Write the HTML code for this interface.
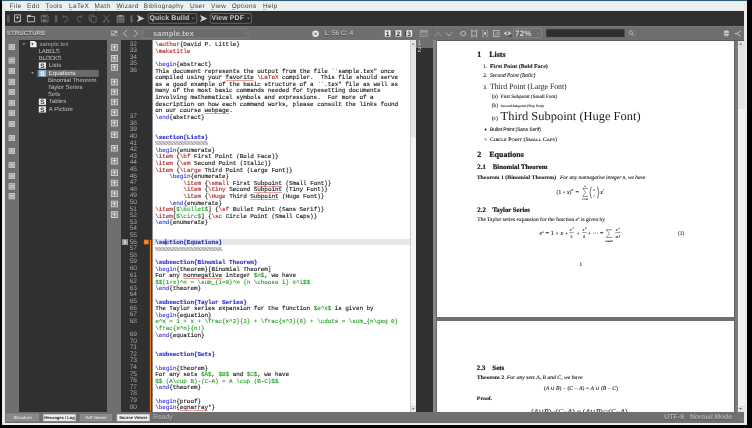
<!DOCTYPE html><html><head><meta charset="utf-8"><style>
*{box-sizing:border-box;margin:0;padding:0}
html,body{width:752px;height:428px;overflow:hidden;background:#000}
body{position:relative;font-family:"Liberation Sans",sans-serif;text-rendering:geometricPrecision}
.a{position:absolute;white-space:nowrap}
.dark{background:#303030}
.mi{font-size:6.4px;letter-spacing:0.4px;color:#3c3c3c;line-height:7px}
.code{font-family:"Liberation Mono",monospace;font-size:6px;letter-spacing:-0.08px;line-height:6.6px;color:#111;-webkit-text-stroke:0.1px;white-space:pre}
.ln{font-family:"Liberation Sans",sans-serif;font-size:6.6px;letter-spacing:-0.35px;line-height:6.6px;color:#a8a8a8;text-align:right;white-space:pre}
.r{color:#a81c1c}.b{color:#3434d6}.g{color:#22a022}.c{color:#8a8a8a}.sb{color:#2a2ac8;font-weight:bold}
.sp{text-decoration:underline #f0a0a0;text-decoration-thickness:1px;text-underline-offset:0.7px}
.tree{font-size:6px;line-height:7px;color:#c4c4c4}
.ser{font-family:"Liberation Serif",serif;color:#111}
</style></head><body><div id="root" style="position:absolute;left:0;top:0;width:752px;height:428px;will-change:transform;background:#000">
<div class="a" style="left:2px;top:0px;width:745px;height:425px;background:#e9eaeb;"></div>
<div class="a" style="left:2px;top:0px;width:745px;height:1px;background:#2e6079;"></div>
<div class="a" style="left:2px;top:1px;width:745px;height:1.3px;background:#dfe8ee;"></div>
<div class="a" style="left:5px;top:2.3px;width:739px;height:8.2px;background:#eeeff0;"></div>
<div class="a mi" style="left:9.7px;top:3.2px;">File</div>
<div class="a" style="left:10.0px;top:9.0px;width:3.2px;height:0.45px;background:#b8b8b8;"></div>
<div class="a mi" style="left:27px;top:3.2px;">Edit</div>
<div class="a" style="left:27.3px;top:9.0px;width:3.2px;height:0.45px;background:#b8b8b8;"></div>
<div class="a mi" style="left:45.6px;top:3.2px;">Tools</div>
<div class="a" style="left:45.9px;top:9.0px;width:3.2px;height:0.45px;background:#b8b8b8;"></div>
<div class="a mi" style="left:69px;top:3.2px;">LaTeX</div>
<div class="a" style="left:69.3px;top:9.0px;width:3.2px;height:0.45px;background:#b8b8b8;"></div>
<div class="a mi" style="left:94.6px;top:3.2px;">Math</div>
<div class="a" style="left:94.89999999999999px;top:9.0px;width:3.2px;height:0.45px;background:#b8b8b8;"></div>
<div class="a mi" style="left:116.4px;top:3.2px;">Wizard</div>
<div class="a" style="left:116.7px;top:9.0px;width:3.2px;height:0.45px;background:#b8b8b8;"></div>
<div class="a mi" style="left:143.8px;top:3.2px;">Bibliography</div>
<div class="a" style="left:144.10000000000002px;top:9.0px;width:3.2px;height:0.45px;background:#b8b8b8;"></div>
<div class="a mi" style="left:190px;top:3.2px;">User</div>
<div class="a" style="left:190.3px;top:9.0px;width:3.2px;height:0.45px;background:#b8b8b8;"></div>
<div class="a mi" style="left:210.9px;top:3.2px;">View</div>
<div class="a" style="left:211.20000000000002px;top:9.0px;width:3.2px;height:0.45px;background:#b8b8b8;"></div>
<div class="a mi" style="left:231.7px;top:3.2px;">Options</div>
<div class="a" style="left:232.0px;top:9.0px;width:3.2px;height:0.45px;background:#b8b8b8;"></div>
<div class="a mi" style="left:263px;top:3.2px;">Help</div>
<div class="a" style="left:263.3px;top:9.0px;width:3.2px;height:0.45px;background:#b8b8b8;"></div>
<div class="a" style="left:5px;top:10.5px;width:739px;height:15px;background:#303030;"></div>
<div class="a" style="left:5px;top:25.5px;width:739px;height:397px;background:#6f6f6f;"></div>
<div class="a" style="left:5px;top:25.5px;width:739px;height:1.5px;background:#767676;"></div>
<div class="a " style="left:6.8px;top:30.4px;font-size:6.2px;font-weight:bold;color:#c4c4c4;letter-spacing:0.05px;text-shadow:0 0.6px 0 #4a4a4a;line-height:8px">STRUCTURE</div>
<div class="a" style="left:19.2px;top:40.4px;width:87.8px;height:371.3px;background:#303030;"></div>
<div class="a" style="left:121.1px;top:40.4px;width:31px;height:371.3px;background:#303030;"></div>
<div class="a" style="left:152px;top:40.4px;width:1.4px;height:371.3px;background:#8c8c8c;"></div>
<div class="a" style="left:153.4px;top:40.4px;width:256.9px;height:371.3px;background:#fff;"></div>
<div class="a" style="left:410.3px;top:40.4px;width:5.9px;height:371.3px;background:#e4e5e6;"></div>
<div class="a" style="left:410.3px;top:137.3px;width:5.9px;height:268.7px;background:#f3f3f3;"></div>
<div class="a" style="left:410.3px;top:40.4px;width:0.6px;height:371.3px;background:#cfcfcf;"></div>
<div class="a" style="left:416.2px;top:40.2px;width:17.3px;height:371.5px;background:#303030;"></div>
<div class="a" style="left:416.2px;top:40.2px;width:17.3px;height:7.4px;background:#6f6f6f;"></div>
<div class="a" style="left:433.3px;top:40.2px;width:4px;height:371.5px;background:#868686;"></div>
<div class="a" style="left:435.7px;top:40.2px;width:1.6px;height:371.5px;background:#686868;"></div>
<div class="a" style="left:437.4px;top:41px;width:296.6px;height:276.3px;background:#fff;"></div>
<div class="a" style="left:437.4px;top:321px;width:296.6px;height:90.7px;background:#fff;"></div>
<div class="a" style="left:734px;top:40.4px;width:3.5px;height:371.3px;background:#7a7a7a;"></div>
<div class="a" style="left:737.5px;top:40.4px;width:7px;height:371.3px;background:#e4e5e6;"></div>
<div class="a" style="left:737.5px;top:108.9px;width:7px;height:297.1px;background:#f3f3f3;"></div>
<div class="a" style="left:734px;top:40.4px;width:1px;height:371.3px;background:#626262;"></div>
<div class="a" style="left:437.2px;top:39.6px;width:307px;height:1.2px;background:#5c5c5c;"></div>
<div class="a" style="left:153.4px;top:238.7px;width:256.9px;height:6.6px;background:#e6e6e6;"></div>
<div class="a" style="left:153.4px;top:40.4px;width:256.9px;height:371.3px;overflow:hidden">
<div class="a code" style="left:1.8px;top:1.80px"><span class="r">\author</span>{David P. Little}</div>
<div class="a code" style="left:1.8px;top:8.40px"><span class="r">\maketitle</span></div>
<div class="a code" style="left:1.8px;top:15.00px"></div>
<div class="a code" style="left:1.8px;top:21.60px"><span class="b">\begin</span>{abstract}</div>
<div class="a code" style="left:1.8px;top:28.20px">This document represents the output from the file ``sample.tex" once</div>
<div class="a code" style="left:1.8px;top:34.80px">compiled using your <span class="sp">favorite</span> <span class="r">\LaTeX</span> compiler.  This file should serve</div>
<div class="a code" style="left:1.8px;top:41.40px">as a good example of the basic structure of a ``.tex" file as well as</div>
<div class="a code" style="left:1.8px;top:48.00px">many of the most basic commands needed for typesetting documents</div>
<div class="a code" style="left:1.8px;top:54.60px">involving mathematical symbols and expressions.  For more of a</div>
<div class="a code" style="left:1.8px;top:61.20px">description on how each command works, please consult the links found</div>
<div class="a code" style="left:1.8px;top:67.80px">on our course <span class="sp">webpage</span>.</div>
<div class="a code" style="left:1.8px;top:74.40px"><span class="b">\end</span>{abstract}</div>
<div class="a code" style="left:1.8px;top:81.00px"></div>
<div class="a code" style="left:1.8px;top:87.60px"></div>
<div class="a code" style="left:1.8px;top:94.20px"><span class="sb">\section{Lists}</span></div>
<div class="a code" style="left:1.8px;top:100.80px"><span class="c">%%%%%%%%%%%%%%%</span></div>
<div class="a code" style="left:1.8px;top:107.40px"><span class="b">\begin</span>{enumerate}</div>
<div class="a code" style="left:1.8px;top:114.00px"><span class="r">\item</span> {<span class="r">\bf</span> First Point (Bold Face)}</div>
<div class="a code" style="left:1.8px;top:120.60px"><span class="r">\item</span> {<span class="r">\em</span> Second Point (Italic)}</div>
<div class="a code" style="left:1.8px;top:127.20px"><span class="r">\item</span> {<span class="r">\Large</span> Third Point (Large Font)}</div>
<div class="a code" style="left:1.8px;top:133.80px">    <span class="b">\begin</span>{enumerate}</div>
<div class="a code" style="left:1.8px;top:140.40px">        <span class="r">\item</span> {<span class="r">\small</span> First <span class="sp">Subpoint</span> (Small Font)}</div>
<div class="a code" style="left:1.8px;top:147.00px">        <span class="r">\item</span> {<span class="r">\tiny</span> Second <span class="sp">Subpoint</span> (Tiny Font)}</div>
<div class="a code" style="left:1.8px;top:153.60px">        <span class="r">\item</span> {<span class="r">\Huge</span> Third <span class="sp">Subpoint</span> (Huge Font)}</div>
<div class="a code" style="left:1.8px;top:160.20px">    <span class="b">\end</span>{enumerate}</div>
<div class="a code" style="left:1.8px;top:166.80px"><span class="r">\item</span>[<span class="g">$\bullet$</span>] {<span class="r">\sf</span> Bullet Point (Sans Serif)}</div>
<div class="a code" style="left:1.8px;top:173.40px"><span class="r">\item</span>[<span class="g">$\circ$</span>] {<span class="r">\sc</span> Circle Point (Small Caps)}</div>
<div class="a code" style="left:1.8px;top:180.00px"><span class="b">\end</span>{enumerate}</div>
<div class="a code" style="left:1.8px;top:186.60px"></div>
<div class="a code" style="left:1.8px;top:193.20px"></div>
<div class="a code" style="left:1.8px;top:199.80px"><span class="sb">\section{Equations}</span></div>
<div class="a code" style="left:1.8px;top:206.40px"><span class="c">%%%%%%%%%%%%%%%%%%%</span></div>
<div class="a code" style="left:1.8px;top:213.00px"></div>
<div class="a code" style="left:1.8px;top:219.60px"><span class="sb">\subsection{Binomial Theorem}</span></div>
<div class="a code" style="left:1.8px;top:226.20px"><span class="b">\begin</span>{theorem}[Binomial Theorem]</div>
<div class="a code" style="left:1.8px;top:232.80px">For any <span class="sp">nonnegative</span> integer <span class="g">$n$</span>, we have</div>
<div class="a code" style="left:1.8px;top:239.40px"><span class="g">$$(1+x)^n = \sum_{i=0}^n {n \choose i} x^i$$</span></div>
<div class="a code" style="left:1.8px;top:246.00px"><span class="b">\end</span>{theorem}</div>
<div class="a code" style="left:1.8px;top:252.60px"></div>
<div class="a code" style="left:1.8px;top:259.20px"><span class="sb">\subsection{Taylor Series}</span></div>
<div class="a code" style="left:1.8px;top:265.80px">The Taylor series expansion for the function <span class="g">$e^x$</span> is given by</div>
<div class="a code" style="left:1.8px;top:272.40px"><span class="b">\begin</span>{equation}</div>
<div class="a code" style="left:1.8px;top:279.00px"><span class="g">e^x = 1 + x + \frac{x^2}{2} + \frac{x^3}{6} + \cdots = \sum_{n\geq 0}</span></div>
<div class="a code" style="left:1.8px;top:285.60px"><span class="g">\frac{x^n}{n!}</span></div>
<div class="a code" style="left:1.8px;top:292.20px"><span class="b">\end</span>{equation}</div>
<div class="a code" style="left:1.8px;top:298.80px"></div>
<div class="a code" style="left:1.8px;top:305.40px"></div>
<div class="a code" style="left:1.8px;top:312.00px"><span class="sb">\subsection{Sets}</span></div>
<div class="a code" style="left:1.8px;top:318.60px"></div>
<div class="a code" style="left:1.8px;top:325.20px"><span class="b">\begin</span>{theorem}</div>
<div class="a code" style="left:1.8px;top:331.80px">For any sets <span class="g">$A$</span>, <span class="g">$B$</span> and <span class="g">$C$</span>, we have</div>
<div class="a code" style="left:1.8px;top:338.40px"><span class="g">$$ (A\cup B)-(C-A) = A \cup (B-C)$$</span></div>
<div class="a code" style="left:1.8px;top:345.00px"><span class="b">\end</span>{theorem}</div>
<div class="a code" style="left:1.8px;top:351.60px"></div>
<div class="a code" style="left:1.8px;top:358.20px"><span class="b">\begin</span>{proof}</div>
<div class="a code" style="left:1.8px;top:364.80px"><span class="b">\begin</span>{<span class="sp">eqnarray</span>*}</div>
</div>
<div class="a ln" style="left:121px;width:15.5px;top:41.60px">32</div>
<div class="a ln" style="left:121px;width:15.5px;top:48.20px">33</div>
<div class="a ln" style="left:121px;width:15.5px;top:54.80px">34</div>
<div class="a ln" style="left:121px;width:15.5px;top:61.40px">35</div>
<div class="a ln" style="left:121px;width:15.5px;top:68.00px">36</div>
<div class="a ln" style="left:121px;width:15.5px;top:114.20px">37</div>
<div class="a ln" style="left:121px;width:15.5px;top:120.80px">38</div>
<div class="a ln" style="left:121px;width:15.5px;top:127.40px">39</div>
<div class="a ln" style="left:121px;width:15.5px;top:134.00px">40</div>
<div class="a ln" style="left:121px;width:15.5px;top:140.60px">41</div>
<div class="a ln" style="left:121px;width:15.5px;top:147.20px">42</div>
<div class="a ln" style="left:121px;width:15.5px;top:153.80px">43</div>
<div class="a ln" style="left:121px;width:15.5px;top:160.40px">44</div>
<div class="a ln" style="left:121px;width:15.5px;top:167.00px">45</div>
<div class="a ln" style="left:121px;width:15.5px;top:173.60px">46</div>
<div class="a ln" style="left:121px;width:15.5px;top:180.20px">47</div>
<div class="a ln" style="left:121px;width:15.5px;top:186.80px">48</div>
<div class="a ln" style="left:121px;width:15.5px;top:193.40px">49</div>
<div class="a ln" style="left:121px;width:15.5px;top:200.00px">50</div>
<div class="a ln" style="left:121px;width:15.5px;top:206.60px">51</div>
<div class="a ln" style="left:121px;width:15.5px;top:213.20px">52</div>
<div class="a ln" style="left:121px;width:15.5px;top:219.80px">53</div>
<div class="a ln" style="left:121px;width:15.5px;top:226.40px">54</div>
<div class="a ln" style="left:121px;width:15.5px;top:233.00px">55</div>
<div class="a ln" style="left:121px;width:15.5px;top:239.60px">56</div>
<div class="a ln" style="left:121px;width:15.5px;top:246.20px">57</div>
<div class="a ln" style="left:121px;width:15.5px;top:252.80px">58</div>
<div class="a ln" style="left:121px;width:15.5px;top:259.40px">59</div>
<div class="a ln" style="left:121px;width:15.5px;top:266.00px">60</div>
<div class="a ln" style="left:121px;width:15.5px;top:272.60px">61</div>
<div class="a ln" style="left:121px;width:15.5px;top:279.20px">62</div>
<div class="a ln" style="left:121px;width:15.5px;top:285.80px">63</div>
<div class="a ln" style="left:121px;width:15.5px;top:292.40px">64</div>
<div class="a ln" style="left:121px;width:15.5px;top:299.00px">65</div>
<div class="a ln" style="left:121px;width:15.5px;top:305.60px">66</div>
<div class="a ln" style="left:121px;width:15.5px;top:312.20px">67</div>
<div class="a ln" style="left:121px;width:15.5px;top:318.80px">68</div>
<div class="a ln" style="left:121px;width:15.5px;top:332.00px">69</div>
<div class="a ln" style="left:121px;width:15.5px;top:338.60px">70</div>
<div class="a ln" style="left:121px;width:15.5px;top:345.20px">71</div>
<div class="a ln" style="left:121px;width:15.5px;top:351.80px">72</div>
<div class="a ln" style="left:121px;width:15.5px;top:358.40px">73</div>
<div class="a ln" style="left:121px;width:15.5px;top:365.00px">74</div>
<div class="a ln" style="left:121px;width:15.5px;top:371.60px">75</div>
<div class="a ln" style="left:121px;width:15.5px;top:378.20px">76</div>
<div class="a ln" style="left:121px;width:15.5px;top:384.80px">77</div>
<div class="a ln" style="left:121px;width:15.5px;top:391.40px">78</div>
<div class="a ln" style="left:121px;width:15.5px;top:398.00px">79</div>
<div class="a ln" style="left:121px;width:15.5px;top:404.60px">80</div>
<svg class="a" style="left:0;top:0" width="752" height="428" viewBox="0 0 752 428"><rect x="7" y="15" width="2.6" height="7.5" fill="#555"/><rect x="7.6" y="15.6" width="1.4" height="6.3" fill="#606060"/><rect x="54.8" y="15" width="2.6" height="7.5" fill="#555"/><rect x="55.4" y="15.6" width="1.4" height="6.3" fill="#606060"/><rect x="130.2" y="15" width="2.6" height="7.5" fill="#555"/><rect x="130.79999999999998" y="15.6" width="1.4" height="6.3" fill="#606060"/><path d="M14.5 14.8 H20.5 V20.2 L18.6 22 H14.5 Z" fill="none" stroke="#c4c4c4" stroke-width="0.9"/><path d="M17.5 16 V19.2 M15.9 17.6 H19.1" stroke="#c4c4c4" stroke-width="0.8"/><path d="M18.4 22 L20.6 19.8 L20.6 22 Z" fill="#eee"/><path d="M27.4 15.4 H30.6 L31.4 16.6 H34.6 V21.8 H27.4 Z" fill="none" stroke="#c4c4c4" stroke-width="0.9"/><rect x="27.4" y="15.4" width="3.4" height="1.6" fill="#c4c4c4"/><path d="M41.4 15.2 H47 L48 16.2 V21.9 H41.4 Z" fill="none" stroke="#707070" stroke-width="0.9"/><rect x="42.8" y="15.4" width="3.6" height="2.2" fill="#707070"/><rect x="42.6" y="19.2" width="4" height="2.6" fill="#707070"/><path d="M63.2 16.8 A2.8 2.8 0 1 1 63.9 21.6" fill="none" stroke="#6a6a6a" stroke-width="0.9"/><path d="M62.4 15 L63.2 17.6 L65.4 16.2" fill="none" stroke="#6a6a6a" stroke-width="0.8"/><path d="M81.6 16.8 A2.8 2.8 0 1 0 80.9 21.6" fill="none" stroke="#6a6a6a" stroke-width="0.9"/><path d="M82.4 15 L81.6 17.6 L79.4 16.2" fill="none" stroke="#6a6a6a" stroke-width="0.8"/><rect x="89.2" y="15" width="5" height="5.6" rx="1" fill="none" stroke="#6a6a6a" stroke-width="0.9"/><rect x="91.2" y="16.6" width="5" height="5.6" rx="1" fill="#303030" stroke="#6a6a6a" stroke-width="0.9"/><path d="M103.6 15 L109 21.4 M109 15 L103.6 21.4" stroke="#6a6a6a" stroke-width="0.9"/><circle cx="104" cy="21.6" r="0.9" fill="none" stroke="#6a6a6a" stroke-width="0.7"/><circle cx="108.6" cy="21.6" r="0.9" fill="none" stroke="#6a6a6a" stroke-width="0.7"/><rect x="117.2" y="16" width="6.6" height="6.2" fill="none" stroke="#8c8c8c" stroke-width="0.9"/><rect x="118.6" y="15" width="3.8" height="1.8" rx="0.6" fill="#9a9a9a"/><rect x="118.2" y="17.2" width="4.6" height="4" fill="#6a6a6a"/><path d="M136.8 15 L144.4 18.5 L136.8 22 L138.8 18.5 Z" fill="#d4d4d4"/><path d="M199.8 15 L207.4 18.5 L199.8 22 L201.8 18.5 Z" fill="#d4d4d4"/><rect x="148.3" y="13.5" width="48.4" height="9.8" rx="1.5" fill="#2c2c2c" stroke="#7a7a7a" stroke-width="0.7"/><rect x="210.3" y="13.5" width="41.2" height="9.8" rx="1.5" fill="#2c2c2c" stroke="#7a7a7a" stroke-width="0.7"/><path d="M192 17.8 L194.2 17.8 L193.1 19.2 Z" fill="#aaa"/><path d="M247.2 17.8 L249.4 17.8 L248.3 19.2 Z" fill="#aaa"/><rect x="110.7" y="30.2" width="7" height="6" rx="0.6" fill="#b8b8b8" stroke="#555" stroke-width="0.4"/><rect x="111.8" y="31.4" width="2.4" height="2" fill="#6a6a6a"/><rect x="114.8" y="33.2" width="2.2" height="2.2" fill="#6a6a6a"/><path d="M112 35 H113.8" stroke="#6a6a6a" stroke-width="0.5"/><path d="M127.2 30 L123.3 33.4 L127.2 36.8" fill="none" stroke="#c4c4c4" stroke-width="0.9"/><path d="M133.9 30 L137.8 33.4 L133.9 36.8" fill="none" stroke="#c4c4c4" stroke-width="0.9"/><rect x="142.4" y="28.8" width="105.6" height="9.4" rx="1" fill="#6b6b6b" stroke="#8a8a8a" stroke-width="0.7"/><path d="M244 33.2 L245.8 33.2 L244.9 34.2 Z" fill="#aaa"/><circle cx="315.6" cy="33.8" r="3.3" fill="#e6e6e6"/><path d="M314.3 32.5 L316.9 35.1 M316.9 32.5 L314.3 35.1" stroke="#555" stroke-width="0.8"/><rect x="383.4" y="30.3" width="7.2" height="6.3" fill="#ececec"/><rect x="383.4" y="30.3" width="1.2" height="6.3" fill="#3a3a3a"/><text x="387.59999999999997" y="36.1" font-family="Liberation Sans" font-weight="bold" font-size="6.6" fill="#2a2a2a" text-anchor="middle">1</text><rect x="394.2" y="30.3" width="7.2" height="6.3" fill="#ececec"/><rect x="394.2" y="30.3" width="1.2" height="6.3" fill="#3a3a3a"/><text x="398.4" y="36.1" font-family="Liberation Sans" font-weight="bold" font-size="6.6" fill="#2a2a2a" text-anchor="middle">2</text><rect x="405" y="30.3" width="7.2" height="6.3" fill="#ececec"/><rect x="405" y="30.3" width="1.2" height="6.3" fill="#3a3a3a"/><text x="409.2" y="36.1" font-family="Liberation Sans" font-weight="bold" font-size="6.6" fill="#2a2a2a" text-anchor="middle">3</text><rect x="420.2" y="30.4" width="7" height="6.2" fill="none" stroke="#a0a0a0" stroke-width="0.8"/><path d="M420.8 32.4 H426.6 M420.8 34.4 H426.6" stroke="#a0a0a0" stroke-width="0.7"/><rect x="420.2" y="30.4" width="7" height="1.4" fill="#a0a0a0"/><rect x="432.6" y="28" width="0.6" height="10" fill="#626262"/><path d="M434.8 36 L438.2 32.2 L441.6 36" fill="none" stroke="#9a9a9a" stroke-width="0.8"/><path d="M445.6 32.2 L449 36 L452.4 32.2" fill="none" stroke="#bdbdbd" stroke-width="0.8"/><circle cx="463.2" cy="33.6" r="2.3" fill="none" stroke="#c4c4c4" stroke-width="0.9"/><path d="M459.8 33.6 H460.9 M465.5 33.6 H466.6" stroke="#c4c4c4" stroke-width="0.8"/><rect x="471.8" y="31" width="4.6" height="5" fill="none" stroke="#c4c4c4" stroke-width="0.8"/><path d="M470.8 30.2 h1.6 M470.8 36.8 h1.6 M476 30.2 h1.6 M476 36.8 h1.6" stroke="#c4c4c4" stroke-width="0.7"/><path d="M482.4 30.4 h2 M486 30.4 h1.6 M482.4 36.6 h2 M486 36.6 h1.6 M482.6 30.4 v6.2 M487.6 30.4 v6.2" stroke="#c4c4c4" stroke-width="0.7" stroke-dasharray="1.2 0.8"/><rect x="483.8" y="32.2" width="2.4" height="2.6" fill="#c4c4c4"/><rect x="493.4" y="30.4" width="5.6" height="6.2" fill="none" stroke="#c4c4c4" stroke-width="0.8"/><path d="M494.8 33.6 L496.2 34.8 L497.8 32" fill="none" stroke="#c4c4c4" stroke-width="0.7"/><path d="M503.6 33.4 Q507.4 29.6 511.2 33.4 Q507.4 36.4 503.6 33.4 Z" fill="#d8d8d8"/><circle cx="507.4" cy="33.2" r="1.2" fill="#6f6f6f"/><rect x="509.6" y="35" width="1.8" height="1.8" fill="#333"/><rect x="513.4" y="28.5" width="28" height="9" rx="1" fill="#6b6b6b" stroke="#8c8c8c" stroke-width="0.7"/><path d="M537.2 32.8 L539 32.8 L538.1 33.8 Z" fill="#aaa"/><rect x="545.8" y="28.8" width="79.2" height="8.6" rx="1" fill="#2e2e2e" stroke="#7c7c7c" stroke-width="0.7"/><circle cx="630.8" cy="32.6" r="1.7" fill="none" stroke="#bdbdbd" stroke-width="0.8"/><path d="M632 33.8 L633.8 35.6" stroke="#bdbdbd" stroke-width="0.9"/><rect x="638.3" y="29" width="0.6" height="8.6" fill="#626262"/><rect x="723.8" y="30.6" width="5.2" height="5" rx="1.6" fill="#d0d0d0"/><rect x="723.2" y="32.8" width="6.4" height="0.8" fill="#6f6f6f"/><rect x="724.6" y="35.4" width="1" height="1.2" fill="#d0d0d0"/><rect x="727.2" y="35.4" width="1" height="1.2" fill="#d0d0d0"/><path d="M734.8 33.6 H737 L740.4 31 M737 33.6 L740.4 36.2" fill="none" stroke="#d0d0d0" stroke-width="0.9"/><rect x="8.6" y="43.9" width="6.4" height="6.2" rx="0.5" fill="#d6d6d6"/><rect x="9.3" y="44.6" width="5" height="4.8" fill="#9c9c9c"/><path d="M10 46.2 H13.6 M10 47.8 H13.6" stroke="#e8e8e8" stroke-width="0.7"/><rect x="8.6" y="57.4" width="6.4" height="6.2" rx="0.5" fill="#d6d6d6"/><rect x="9.3" y="58.1" width="5" height="4.8" fill="#9c9c9c"/><path d="M10 59.7 H13.6 M10 61.3 H13.6" stroke="#e8e8e8" stroke-width="0.7"/><rect x="8.6" y="67.9" width="6.4" height="6.2" rx="0.5" fill="#d6d6d6"/><rect x="9.3" y="68.6" width="5" height="4.8" fill="#9c9c9c"/><path d="M10 70.2 H13.6 M10 71.8 H13.6" stroke="#e8e8e8" stroke-width="0.7"/><rect x="8.6" y="78.7" width="6.4" height="6.2" rx="0.5" fill="#d6d6d6"/><rect x="9.3" y="79.39999999999999" width="5" height="4.8" fill="#9c9c9c"/><path d="M10 81.0 H13.6 M10 82.6 H13.6" stroke="#e8e8e8" stroke-width="0.7"/><rect x="8.6" y="88.9" width="6.4" height="6.2" rx="0.5" fill="#d6d6d6"/><rect x="9.3" y="89.6" width="5" height="4.8" fill="#9c9c9c"/><path d="M10 91.2 H13.6 M10 92.8 H13.6" stroke="#e8e8e8" stroke-width="0.7"/><rect x="8.6" y="99.9" width="6.4" height="6.2" rx="0.5" fill="#d6d6d6"/><rect x="9.3" y="100.6" width="5" height="4.8" fill="#9c9c9c"/><path d="M10 102.2 H13.6 M10 103.8 H13.6" stroke="#e8e8e8" stroke-width="0.7"/><rect x="8.6" y="109.9" width="6.4" height="6.2" rx="0.5" fill="#d6d6d6"/><rect x="9.3" y="110.6" width="5" height="4.8" fill="#9c9c9c"/><path d="M10 112.2 H13.6 M10 113.8 H13.6" stroke="#e8e8e8" stroke-width="0.7"/><rect x="8.6" y="120.9" width="6.4" height="6.2" rx="0.5" fill="#d6d6d6"/><rect x="9.3" y="121.6" width="5" height="4.8" fill="#9c9c9c"/><path d="M10 123.2 H13.6 M10 124.8 H13.6" stroke="#e8e8e8" stroke-width="0.7"/><rect x="8.6" y="134.9" width="6.4" height="6.2" rx="0.5" fill="#d6d6d6"/><rect x="9.3" y="135.6" width="5" height="4.8" fill="#9c9c9c"/><path d="M10 137.2 H13.6 M10 138.8 H13.6" stroke="#e8e8e8" stroke-width="0.7"/><rect x="8.6" y="147.9" width="6.4" height="6.2" rx="0.5" fill="#d6d6d6"/><rect x="9.3" y="148.6" width="5" height="4.8" fill="#9c9c9c"/><path d="M10 150.2 H13.6 M10 151.8 H13.6" stroke="#e8e8e8" stroke-width="0.7"/><rect x="8.6" y="161.9" width="6.4" height="6.2" rx="0.5" fill="#d6d6d6"/><rect x="9.3" y="162.6" width="5" height="4.8" fill="#9c9c9c"/><path d="M10 164.2 H13.6 M10 165.8 H13.6" stroke="#e8e8e8" stroke-width="0.7"/><rect x="8.6" y="172.9" width="6.4" height="6.2" rx="0.5" fill="#d6d6d6"/><rect x="9.3" y="173.6" width="5" height="4.8" fill="#9c9c9c"/><path d="M10 175.2 H13.6 M10 176.8 H13.6" stroke="#e8e8e8" stroke-width="0.7"/><rect x="8.6" y="183.3" width="6.4" height="6.2" rx="0.5" fill="#d6d6d6"/><rect x="9.3" y="184.0" width="5" height="4.8" fill="#9c9c9c"/><path d="M10 185.6 H13.6 M10 187.20000000000002 H13.6" stroke="#e8e8e8" stroke-width="0.7"/><rect x="8.6" y="193.1" width="6.4" height="6.2" rx="0.5" fill="#d6d6d6"/><rect x="9.3" y="193.79999999999998" width="5" height="4.8" fill="#9c9c9c"/><path d="M10 195.39999999999998 H13.6 M10 197.0 H13.6" stroke="#e8e8e8" stroke-width="0.7"/><rect x="110.9" y="44.2" width="7" height="6.6" rx="0.5" fill="#d8d8d8"/><rect x="111.7" y="45.0" width="5.4" height="5" fill="#8e8e8e"/><path d="M112.6 46.9 H116.2 M114.4 45.5 V49.3" stroke="#efefef" stroke-width="0.8"/><rect x="110.9" y="55.1" width="7" height="6.6" rx="0.5" fill="#d8d8d8"/><rect x="111.7" y="55.9" width="5.4" height="5" fill="#8e8e8e"/><path d="M112.6 57.8 H116.2 M114.4 56.4 V60.199999999999996" stroke="#efefef" stroke-width="0.8"/><rect x="110.9" y="64.10000000000001" width="7" height="6.6" rx="0.5" fill="#d8d8d8"/><rect x="111.7" y="64.9" width="5.4" height="5" fill="#8e8e8e"/><path d="M112.6 66.80000000000001 H116.2 M114.4 65.4 V69.2" stroke="#efefef" stroke-width="0.8"/><rect x="110.9" y="78.8" width="7" height="6.6" rx="0.5" fill="#d8d8d8"/><rect x="111.7" y="79.6" width="5.4" height="5" fill="#8e8e8e"/><path d="M112.6 81.5 H116.2 M114.4 80.1 V83.89999999999999" stroke="#efefef" stroke-width="0.8"/><rect x="110.9" y="88.7" width="7" height="6.6" rx="0.5" fill="#d8d8d8"/><rect x="111.7" y="89.5" width="5.4" height="5" fill="#8e8e8e"/><path d="M112.6 91.4 H116.2 M114.4 90 V93.8" stroke="#efefef" stroke-width="0.8"/><rect x="110.9" y="98.7" width="7" height="6.6" rx="0.5" fill="#d8d8d8"/><rect x="111.7" y="99.5" width="5.4" height="5" fill="#8e8e8e"/><path d="M112.6 101.4 H116.2 M114.4 100 V103.8" stroke="#efefef" stroke-width="0.8"/><rect x="110.9" y="109.3" width="7" height="6.6" rx="0.5" fill="#d8d8d8"/><rect x="111.7" y="110.1" width="5.4" height="5" fill="#8e8e8e"/><path d="M112.6 112.0 H116.2 M114.4 110.6 V114.39999999999999" stroke="#efefef" stroke-width="0.8"/><rect x="110.9" y="119.8" width="7" height="6.6" rx="0.5" fill="#d8d8d8"/><rect x="111.7" y="120.6" width="5.4" height="5" fill="#8e8e8e"/><path d="M112.6 122.5 H116.2 M114.4 121.1 V124.89999999999999" stroke="#efefef" stroke-width="0.8"/><rect x="110.9" y="131.39999999999998" width="7" height="6.6" rx="0.5" fill="#d8d8d8"/><rect x="111.7" y="132.2" width="5.4" height="5" fill="#8e8e8e"/><path d="M112.6 134.1 H116.2 M114.4 132.7 V136.5" stroke="#efefef" stroke-width="0.8"/><rect x="110.9" y="145.0" width="7" height="6.6" rx="0.5" fill="#d8d8d8"/><rect x="111.7" y="145.8" width="5.4" height="5" fill="#8e8e8e"/><path d="M112.6 147.70000000000002 H116.2 M114.4 146.3 V150.10000000000002" stroke="#efefef" stroke-width="0.8"/><rect x="110.9" y="157.79999999999998" width="7" height="6.6" rx="0.5" fill="#d8d8d8"/><rect x="111.7" y="158.6" width="5.4" height="5" fill="#8e8e8e"/><path d="M112.6 160.5 H116.2 M114.4 159.1 V162.9" stroke="#efefef" stroke-width="0.8"/><rect x="110.9" y="169.39999999999998" width="7" height="6.6" rx="0.5" fill="#d8d8d8"/><rect x="111.7" y="170.2" width="5.4" height="5" fill="#8e8e8e"/><path d="M112.6 172.1 H116.2 M114.4 170.7 V174.5" stroke="#efefef" stroke-width="0.8"/><rect x="110.9" y="179.7" width="7" height="6.6" rx="0.5" fill="#d8d8d8"/><rect x="111.7" y="180.5" width="5.4" height="5" fill="#8e8e8e"/><path d="M112.6 182.4 H116.2 M114.4 181 V184.8" stroke="#efefef" stroke-width="0.8"/><rect x="110.9" y="190.5" width="7" height="6.6" rx="0.5" fill="#d8d8d8"/><rect x="111.7" y="191.3" width="5.4" height="5" fill="#8e8e8e"/><path d="M112.6 193.20000000000002 H116.2 M114.4 191.8 V195.60000000000002" stroke="#efefef" stroke-width="0.8"/><rect x="110.9" y="200.7" width="7" height="6.6" rx="0.5" fill="#d8d8d8"/><rect x="111.7" y="201.5" width="5.4" height="5" fill="#8e8e8e"/><path d="M112.6 203.4 H116.2 M114.4 202 V205.8" stroke="#efefef" stroke-width="0.8"/><rect x="110.9" y="211.29999999999998" width="7" height="6.6" rx="0.5" fill="#d8d8d8"/><rect x="111.7" y="212.1" width="5.4" height="5" fill="#8e8e8e"/><path d="M112.6 214.0 H116.2 M114.4 212.6 V216.4" stroke="#efefef" stroke-width="0.8"/><path d="M22.2 43.3 L25.6 43.3 L23.9 45 Z" fill="#9a9a9a"/><path d="M31 72.3 L34.4 72.3 L32.7 74 Z" fill="#9a9a9a"/><path d="M30.2 41 H34.8 L36.6 42.8 V47.2 H30.2 Z" fill="#f2f2f2"/><path d="M31.4 43 L33.4 43 L32.4 45.8 Z" fill="#444"/><rect x="37.2" y="69.9" width="61.6" height="7" fill="#6a6a6a"/><rect x="38.8" y="62.4" width="7.2" height="6.2" fill="#ececec"/><text x="42.4" y="67.8" font-family="Liberation Sans" font-weight="bold" font-size="6.4" fill="#303030" text-anchor="middle">S</text><rect x="38.8" y="70.30000000000001" width="7.2" height="6.2" fill="#8fc0e0"/><text x="42.4" y="75.7" font-family="Liberation Sans" font-weight="bold" font-size="6.4" fill="#ffffff" text-anchor="middle">S</text><rect x="38.8" y="98.7" width="7.2" height="6.2" fill="#ececec"/><text x="42.4" y="104.1" font-family="Liberation Sans" font-weight="bold" font-size="6.4" fill="#303030" text-anchor="middle">S</text><rect x="38.8" y="106.30000000000001" width="7.2" height="6.2" fill="#ececec"/><text x="42.4" y="111.7" font-family="Liberation Sans" font-weight="bold" font-size="6.4" fill="#303030" text-anchor="middle">S</text><rect x="165.4" y="238.8" width="0.7" height="6.6" fill="#222"/><rect x="122" y="239.2" width="6" height="5.8" fill="#9a9a9a"/><rect x="124.4" y="240.2" width="1.2" height="3.8" fill="#eee"/><rect x="143.9" y="239.7" width="4.8" height="4.7" fill="#f07d10"/><rect x="145.2" y="241.8" width="2.2" height="0.6" fill="#ffd0a0"/><rect x="149.9" y="240" width="1.2" height="171.7" fill="#f07d10"/><path d="M411.9 44.6 L413.3 43.2 L414.7 44.6 Z" fill="#555"/><rect x="410.3" y="46.2" width="5.9" height="0.5" fill="#cfcfcf"/><path d="M411.9 408.2 L413.3 409.6 L414.7 408.2 Z" fill="#555"/><rect x="410.3" y="406" width="5.9" height="0.5" fill="#cfcfcf"/><path d="M738.8 44.6 L740.6 43 L742.4 44.6 Z" fill="#666"/><rect x="736.8" y="46.4" width="7.7" height="0.5" fill="#cfcfcf"/><path d="M738.8 408 L740.6 409.6 L742.4 408 Z" fill="#666"/><rect x="736.8" y="406" width="7.7" height="0.5" fill="#cfcfcf"/><path d="M742.6 420.6 L743.6 419.6 M740.6 420.6 L743.6 417.6" stroke="#999" stroke-width="0.5"/><rect x="6.5" y="414" width="32.2" height="7" fill="#888" stroke="#9c9c9c" stroke-width="0.5"/><rect x="43.4" y="414.2" width="32.2" height="6.8" fill="#f0f0f0" stroke="#bbb" stroke-width="0.5"/><rect x="80.2" y="414.2" width="31.6" height="6.8" fill="#888" stroke="#9c9c9c" stroke-width="0.5"/><rect x="117" y="414.2" width="32.5" height="6.8" fill="#f0f0f0" stroke="#bbb" stroke-width="0.5"/><defs><clipPath id="pc"><rect x="437" y="41" width="297" height="370.7"/></clipPath></defs><g clip-path="url(#pc)"><text x="477.3" y="56.7" font-family="Liberation Serif" font-size="8" font-weight="bold" font-style="normal" fill="#1a1a1a" stroke="#1a1a1a" stroke-width="0.22">1</text><text x="489.3" y="56.7" font-family="Liberation Serif" font-size="8" font-weight="bold" font-style="normal" fill="#1a1a1a" stroke="#1a1a1a" stroke-width="0.22" textLength="16.2" lengthAdjust="spacingAndGlyphs">Lists</text><text x="483.3" y="67.6" font-family="Liberation Serif" font-size="5.4" font-weight="normal" font-style="normal" fill="#1a1a1a" stroke="#1a1a1a" stroke-width="0.1">1.</text><text x="490" y="67.6" font-family="Liberation Serif" font-size="5.6" font-weight="bold" font-style="normal" fill="#1a1a1a" stroke="#1a1a1a" stroke-width="0.1" textLength="57.8" lengthAdjust="spacingAndGlyphs">First Point (Bold Face)</text><text x="483.3" y="76.9" font-family="Liberation Serif" font-size="5.4" font-weight="normal" font-style="normal" fill="#1a1a1a" stroke="#1a1a1a" stroke-width="0.1">2.</text><text x="490" y="76.9" font-family="Liberation Serif" font-size="5.6" font-weight="normal" font-style="italic" fill="#1a1a1a" stroke="#1a1a1a" stroke-width="0.1" textLength="45.2" lengthAdjust="spacingAndGlyphs">Second Point (Italic)</text><text x="483.3" y="88.9" font-family="Liberation Serif" font-size="5.4" font-weight="normal" font-style="normal" fill="#1a1a1a" stroke="#1a1a1a" stroke-width="0.1">3.</text><text x="490" y="88.9" font-family="Liberation Serif" font-size="8" font-weight="normal" font-style="normal" fill="#1a1a1a" stroke="#1a1a1a" stroke-width="0.0" textLength="76.7" lengthAdjust="spacingAndGlyphs">Third Point (Large Font)</text><text x="491.7" y="98.2" font-family="Liberation Serif" font-size="5.4" font-weight="normal" font-style="normal" fill="#1a1a1a" stroke="#1a1a1a" stroke-width="0.1" textLength="6.3" lengthAdjust="spacingAndGlyphs">(a)</text><text x="500.6" y="98.2" font-family="Liberation Serif" font-size="5" font-weight="normal" font-style="normal" fill="#1a1a1a" stroke="#1a1a1a" stroke-width="0.1" textLength="56.3" lengthAdjust="spacingAndGlyphs">First Subpoint (Small Font)</text><text x="491.7" y="107" font-family="Liberation Serif" font-size="5.4" font-weight="normal" font-style="normal" fill="#1a1a1a" stroke="#1a1a1a" stroke-width="0.1" textLength="6.3" lengthAdjust="spacingAndGlyphs">(b)</text><text x="500.6" y="107" font-family="Liberation Serif" font-size="3.2" font-weight="normal" font-style="normal" fill="#1a1a1a" stroke="#1a1a1a" stroke-width="0.1" textLength="43.2" lengthAdjust="spacingAndGlyphs">Second Subpoint (Tiny Font)</text><text x="491.7" y="119.5" font-family="Liberation Serif" font-size="5.4" font-weight="normal" font-style="normal" fill="#1a1a1a" stroke="#1a1a1a" stroke-width="0.1" textLength="6.3" lengthAdjust="spacingAndGlyphs">(c)</text><text x="500.6" y="119.5" font-family="Liberation Serif" font-size="12.2" font-weight="normal" font-style="normal" fill="#1a1a1a" stroke="#1a1a1a" stroke-width="0.0" textLength="140" lengthAdjust="spacingAndGlyphs">Third Subpoint (Huge Font)</text><circle cx="485.6" cy="129.4" r="1" fill="#1a1a1a"/><text x="490" y="131" font-family="Liberation Sans" font-size="5" font-weight="normal" font-style="normal" fill="#1a1a1a" stroke="#1a1a1a" stroke-width="0.1" textLength="50.9" lengthAdjust="spacingAndGlyphs">Bullet Point (Sans Serif)</text><circle cx="485.6" cy="139.4" r="0.9" fill="none" stroke="#333" stroke-width="0.4"/><text x="490" y="140.9" font-family="Liberation Serif" font-size="5.2" font-weight="normal" font-style="normal" fill="#1a1a1a" stroke="#1a1a1a" stroke-width="0.1" textLength="66.9" lengthAdjust="spacingAndGlyphs">C<tspan font-size="3.9">IRCLE</tspan> P<tspan font-size="3.9">OINT</tspan> (S<tspan font-size="3.9">MALL</tspan> C<tspan font-size="3.9">APS</tspan>)</text><text x="477.3" y="157" font-family="Liberation Serif" font-size="8" font-weight="bold" font-style="normal" fill="#1a1a1a" stroke="#1a1a1a" stroke-width="0.22">2</text><text x="489.2" y="157" font-family="Liberation Serif" font-size="8" font-weight="bold" font-style="normal" fill="#1a1a1a" stroke="#1a1a1a" stroke-width="0.22" textLength="34.7" lengthAdjust="spacingAndGlyphs">Equations</text><text x="477.3" y="168.9" font-family="Liberation Serif" font-size="6.8" font-weight="bold" font-style="normal" fill="#1a1a1a" stroke="#1a1a1a" stroke-width="0.22">2.1</text><text x="492.8" y="168.9" font-family="Liberation Serif" font-size="6.8" font-weight="bold" font-style="normal" fill="#1a1a1a" stroke="#1a1a1a" stroke-width="0.22" textLength="54.6" lengthAdjust="spacingAndGlyphs">Binomial Theorem</text><text x="476.7" y="178.9" font-family="Liberation Serif" font-size="5.4" font-weight="bold" font-style="normal" fill="#1a1a1a" stroke="#1a1a1a" stroke-width="0.1" textLength="79.5" lengthAdjust="spacingAndGlyphs">Theorem 1 (Binomial Theorem)</text><text x="560" y="178.9" font-family="Liberation Serif" font-size="5.4" font-weight="normal" font-style="italic" fill="#1a1a1a" stroke="#1a1a1a" stroke-width="0.1" textLength="85.4" lengthAdjust="spacingAndGlyphs">For any nonnegative integer n, we have</text><text x="556.6" y="194" font-family="Liberation Serif" font-size="5.8" font-weight="normal" font-style="normal" fill="#1a1a1a" stroke="#1a1a1a" stroke-width="0.1" textLength="14.6" lengthAdjust="spacingAndGlyphs">(1 + <tspan font-style="italic">x</tspan>)</text><text x="571.6" y="191.4" font-family="Liberation Serif" font-size="3.6" font-weight="normal" font-style="italic" fill="#1a1a1a" stroke="#1a1a1a" stroke-width="0.1">n</text><text x="575.6" y="194" font-family="Liberation Serif" font-size="5.8" font-weight="normal" font-style="normal" fill="#1a1a1a" stroke="#1a1a1a" stroke-width="0.1">=</text><path d="M582.6 188.4 H587.8 M582.8 188.4 L585.6 192.4 L582.8 196.4 H587.8" fill="none" stroke="#222" stroke-width="0.5"/><text x="584.4" y="187.2" font-family="Liberation Serif" font-size="2.8" font-weight="normal" font-style="italic" fill="#1a1a1a" stroke="#1a1a1a" stroke-width="0.1">n</text><text x="582.2" y="200.4" font-family="Liberation Serif" font-size="2.8" font-weight="normal" font-style="italic" fill="#1a1a1a" stroke="#1a1a1a" stroke-width="0.1" textLength="5.8" lengthAdjust="spacingAndGlyphs">i=0</text><path d="M591.2 186.6 Q588.8 192.6 591.2 198.6 M597.6 186.6 Q600 192.6 597.6 198.6" fill="none" stroke="#222" stroke-width="0.6"/><text x="593.2" y="191.4" font-family="Liberation Serif" font-size="3.4" font-weight="normal" font-style="italic" fill="#1a1a1a" stroke="#1a1a1a" stroke-width="0.1">n</text><text x="593.6" y="197" font-family="Liberation Serif" font-size="3.4" font-weight="normal" font-style="italic" fill="#1a1a1a" stroke="#1a1a1a" stroke-width="0.1">i</text><text x="600.2" y="194" font-family="Liberation Serif" font-size="5.8" font-weight="normal" font-style="italic" fill="#1a1a1a" stroke="#1a1a1a" stroke-width="0.1">x</text><text x="603.2" y="191.4" font-family="Liberation Serif" font-size="3.4" font-weight="normal" font-style="italic" fill="#1a1a1a" stroke="#1a1a1a" stroke-width="0.1">i</text><text x="477.3" y="211.8" font-family="Liberation Serif" font-size="6.8" font-weight="bold" font-style="normal" fill="#1a1a1a" stroke="#1a1a1a" stroke-width="0.22">2.2</text><text x="492.5" y="211.8" font-family="Liberation Serif" font-size="6.8" font-weight="bold" font-style="normal" fill="#1a1a1a" stroke="#1a1a1a" stroke-width="0.22" textLength="37.4" lengthAdjust="spacingAndGlyphs">Taylor Series</text><text x="477.3" y="220.5" font-family="Liberation Serif" font-size="5.4" font-weight="normal" font-style="normal" fill="#1a1a1a" stroke="#1a1a1a" stroke-width="0.1" textLength="127.7" lengthAdjust="spacingAndGlyphs">The Taylor series expansion for the function <tspan font-style="italic">e</tspan><tspan font-size="3.4" dy="-1.6" font-style="italic">x</tspan><tspan dy="1.6"> is given by</tspan></text><text x="539.6" y="235" font-family="Liberation Serif" font-size="5.8" font-weight="normal" font-style="normal" fill="#1a1a1a" stroke="#1a1a1a" stroke-width="0.1" textLength="28.7" lengthAdjust="spacingAndGlyphs"><tspan font-style="italic">e</tspan><tspan font-size="3.4" dy="-1.9" font-style="italic">x</tspan><tspan dy="1.9"> = 1 + </tspan><tspan font-style="italic">x</tspan> +</text><path d="M569.4 232.6 H573.8 M582.2 232.6 H586.6 M615.2 232.6 H620.4" stroke="#222" stroke-width="0.45"/><text x="569.8" y="230.6" font-family="Liberation Serif" font-size="4" font-weight="normal" font-style="italic" fill="#1a1a1a" stroke="#1a1a1a" stroke-width="0.1">x</text><text x="572.2" y="228.8" font-family="Liberation Serif" font-size="2.8" font-weight="normal" font-style="normal" fill="#1a1a1a" stroke="#1a1a1a" stroke-width="0.1">2</text><text x="570.4" y="238.4" font-family="Liberation Serif" font-size="4" font-weight="normal" font-style="normal" fill="#1a1a1a" stroke="#1a1a1a" stroke-width="0.1">2</text><text x="576.4" y="235" font-family="Liberation Serif" font-size="5.8" font-weight="normal" font-style="normal" fill="#1a1a1a" stroke="#1a1a1a" stroke-width="0.1">+</text><text x="582.6" y="230.6" font-family="Liberation Serif" font-size="4" font-weight="normal" font-style="italic" fill="#1a1a1a" stroke="#1a1a1a" stroke-width="0.1">x</text><text x="585" y="228.8" font-family="Liberation Serif" font-size="2.8" font-weight="normal" font-style="normal" fill="#1a1a1a" stroke="#1a1a1a" stroke-width="0.1">3</text><text x="583.2" y="238.4" font-family="Liberation Serif" font-size="4" font-weight="normal" font-style="normal" fill="#1a1a1a" stroke="#1a1a1a" stroke-width="0.1">6</text><text x="587.6" y="235" font-family="Liberation Serif" font-size="5.8" font-weight="normal" font-style="normal" fill="#1a1a1a" stroke="#1a1a1a" stroke-width="0.1" textLength="15.8" lengthAdjust="spacingAndGlyphs">+ ··· =</text><path d="M606.2 229.8 H612 M606.4 229.8 L609.6 233.6 L606.4 237.4 H612" fill="none" stroke="#222" stroke-width="0.5"/><text x="605.2" y="241.6" font-family="Liberation Serif" font-size="2.8" font-weight="normal" font-style="italic" fill="#1a1a1a" stroke="#1a1a1a" stroke-width="0.1" textLength="7.4" lengthAdjust="spacingAndGlyphs">n≥0</text><text x="615.8" y="230.6" font-family="Liberation Serif" font-size="4" font-weight="normal" font-style="italic" fill="#1a1a1a" stroke="#1a1a1a" stroke-width="0.1">x</text><text x="618.2" y="228.8" font-family="Liberation Serif" font-size="2.8" font-weight="normal" font-style="italic" fill="#1a1a1a" stroke="#1a1a1a" stroke-width="0.1">n</text><text x="615.6" y="238.4" font-family="Liberation Serif" font-size="4" font-weight="normal" font-style="italic" fill="#1a1a1a" stroke="#1a1a1a" stroke-width="0.1" textLength="4.6" lengthAdjust="spacingAndGlyphs">n!</text><text x="677.9" y="235" font-family="Liberation Serif" font-size="5.6" font-weight="normal" font-style="normal" fill="#1a1a1a" stroke="#1a1a1a" stroke-width="0.1" textLength="6.4" lengthAdjust="spacingAndGlyphs">(1)</text><text x="579.6" y="266.2" font-family="Liberation Serif" font-size="5.2" font-weight="normal" font-style="normal" fill="#1a1a1a" stroke="#1a1a1a" stroke-width="0.1">1</text><text x="476.8" y="369.6" font-family="Liberation Serif" font-size="6.8" font-weight="bold" font-style="normal" fill="#1a1a1a" stroke="#1a1a1a" stroke-width="0.22">2.3</text><text x="492.3" y="369.6" font-family="Liberation Serif" font-size="6.8" font-weight="bold" font-style="normal" fill="#1a1a1a" stroke="#1a1a1a" stroke-width="0.22" textLength="12" lengthAdjust="spacingAndGlyphs">Sets</text><text x="476.8" y="378.7" font-family="Liberation Serif" font-size="5.4" font-weight="bold" font-style="normal" fill="#1a1a1a" stroke="#1a1a1a" stroke-width="0.1" textLength="27.5" lengthAdjust="spacingAndGlyphs">Theorem 2</text><text x="506.7" y="378.7" font-family="Liberation Serif" font-size="5.4" font-weight="normal" font-style="italic" fill="#1a1a1a" stroke="#1a1a1a" stroke-width="0.1" textLength="75.8" lengthAdjust="spacingAndGlyphs">For any sets A, B and C, we have</text><text x="543.8" y="389.9" font-family="Liberation Serif" font-size="5.6" font-weight="normal" font-style="normal" fill="#1a1a1a" stroke="#1a1a1a" stroke-width="0.1" textLength="74.1" lengthAdjust="spacingAndGlyphs">(<tspan font-style="italic">A</tspan> ∪ <tspan font-style="italic">B</tspan>) − (<tspan font-style="italic">C</tspan> − <tspan font-style="italic">A</tspan>) = <tspan font-style="italic">A</tspan> ∪ (<tspan font-style="italic">B</tspan> − <tspan font-style="italic">C</tspan>)</text><text x="476.8" y="399.5" font-family="Liberation Serif" font-size="5.4" font-weight="bold" font-style="normal" fill="#1a1a1a" stroke="#1a1a1a" stroke-width="0.1" textLength="15.5" lengthAdjust="spacingAndGlyphs">Proof.</text><text x="531.3" y="412.9" font-family="Liberation Serif" font-size="5.6" font-weight="normal" font-style="normal" fill="#1a1a1a" stroke="#1a1a1a" stroke-width="0.1" textLength="96.2" lengthAdjust="spacingAndGlyphs">(<tspan font-style="italic">A</tspan>∪<tspan font-style="italic">B</tspan>)−(<tspan font-style="italic">C</tspan>−<tspan font-style="italic">A</tspan>)  =  (<tspan font-style="italic">A</tspan>∪<tspan font-style="italic">B</tspan>)∩(<tspan font-style="italic">C</tspan>−<tspan font-style="italic">A</tspan>)</text></g></svg>
<div class="a " style="left:149.4px;top:14.1px;font-size:6.9px;font-weight:bold;color:#c8c8c8;line-height:9px;letter-spacing:0.15px">Quick Build</div>
<div class="a " style="left:211.6px;top:14.1px;font-size:6.9px;font-weight:bold;color:#c8c8c8;line-height:9px;letter-spacing:0.15px">View PDF</div>
<div class="a " style="left:153px;top:30.4px;font-size:7.6px;font-weight:bold;color:#c6c6c6;line-height:8px;letter-spacing:0.15px">sample.tex</div>
<div class="a " style="left:324.6px;top:30.3px;font-size:6.6px;color:#d4d4d4;text-shadow:0 0.7px 0 #4a4a4a;line-height:8px">L: 56 C: 4</div>
<div class="a " style="left:515px;top:29.2px;font-size:8px;font-weight:bold;color:#d6d6d6;line-height:9px;letter-spacing:0.2px">72%</div>
<div class="a tree" style="left:39.5px;top:41.9px;color:#a8a8a8">sample.tex</div>
<div class="a tree" style="left:38.7px;top:49.1px;color:#c4c4c4;letter-spacing:-0.3px">LABELS</div>
<div class="a tree" style="left:38.7px;top:56.1px;color:#c4c4c4;letter-spacing:-0.3px">BLOCKS</div>
<div class="a tree" style="left:48.8px;top:63.199999999999996px;color:#c4c4c4">Lists</div>
<div class="a tree" style="left:48.8px;top:70.80000000000001px;color:#f0f0f0">Equations</div>
<div class="a tree" style="left:47.9px;top:78.10000000000001px;color:#c4c4c4">Binomial Theorem</div>
<div class="a tree" style="left:47.9px;top:85.10000000000001px;color:#c4c4c4">Taylor Series</div>
<div class="a tree" style="left:47.9px;top:92.10000000000001px;color:#c4c4c4">Sets</div>
<div class="a tree" style="left:48.8px;top:99.4px;color:#c4c4c4">Tables</div>
<div class="a tree" style="left:48.8px;top:107.10000000000001px;color:#c4c4c4">A Picture</div>
<div class="a " style="left:417.6px;top:40.2px;font-size:7px;color:#c8c8c8;line-height:8px">1</div>
<div class="a " style="left:417.6px;top:47.4px;font-size:7px;color:#c8c8c8;line-height:8px">2</div>
<div class="a" style="left:6.3px;top:414.9px;width:32.6px;text-align:center;font-size:4.1px;font-weight:bold;line-height:6px;color:#dedede">Structure</div>
<div class="a" style="left:43.2px;top:414.9px;width:32.5px;text-align:center;font-size:4.1px;font-weight:bold;line-height:6px;color:#222">Messages / Log</div>
<div class="a" style="left:80px;top:414.9px;width:31.9px;text-align:center;font-size:4.1px;font-weight:bold;line-height:6px;color:#dedede">Pdf Viewer</div>
<div class="a" style="left:116.8px;top:414.9px;width:32.8px;text-align:center;font-size:4.1px;font-weight:bold;line-height:6px;color:#222">Source Viewer</div>
<div class="a " style="left:153px;top:413.2px;font-size:6.8px;color:#b0b0b0;line-height:9px;-webkit-text-stroke:0.15px #a6a6a6;text-shadow:0 0.6px 0 #555">Ready</div>
<div class="a " style="left:664.2px;top:414px;font-size:6.8px;font-weight:bold;color:#b2b2b2;line-height:8px;letter-spacing:0.15px;text-shadow:0 0.6px 0 #555">UTF-8</div>
<div class="a " style="left:689.9px;top:414px;font-size:6.8px;font-weight:bold;color:#b2b2b2;line-height:8px;letter-spacing:-0.1px;text-shadow:0 0.6px 0 #555">Normal Mode</div>
</div></body></html>
